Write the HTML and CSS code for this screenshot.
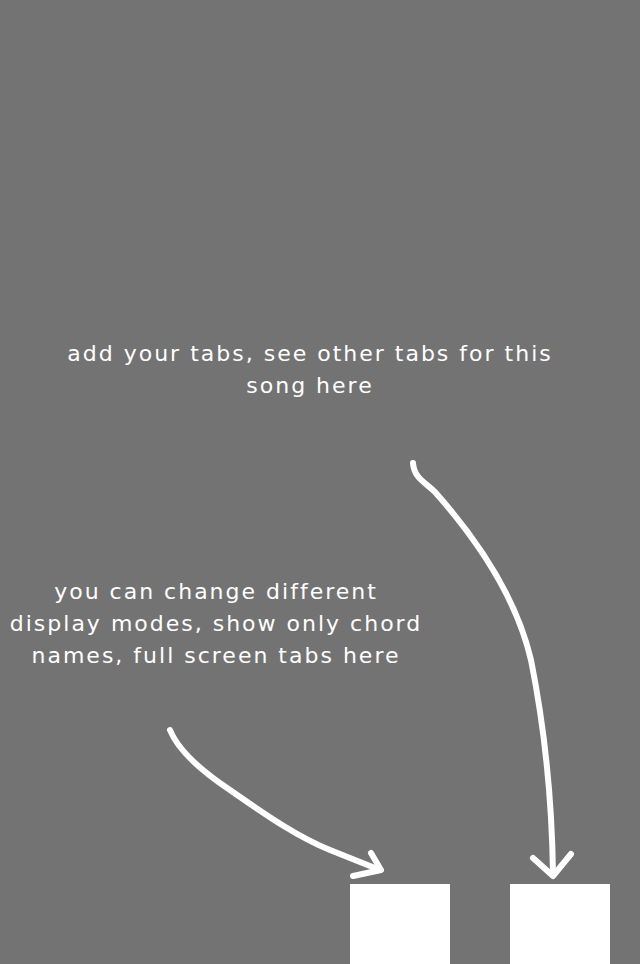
FILE: index.html
```html
<!DOCTYPE html>
<html>
<head>
<meta charset="utf-8">
<link rel="stylesheet" href="styles.css">
</head>
<body>
<div class="screen">
  <p class="tip tip-top">add your tabs, see other tabs for this<br>song here</p>
  <p class="tip tip-mid">you can change different<br>display modes, show only chord<br>names, full screen tabs here</p>
  <div class="bar">
    <div class="slot"></div>
    <div class="slot"></div>
  </div>
  <svg class="arrows" width="640" height="964" viewBox="0 0 640 964">
    <g fill="none" stroke="#ffffff" stroke-width="6" stroke-linecap="round" stroke-linejoin="round">
      <path d="M413 463 C414 478 425 482 435 492 C482 545 517 600 531 660 C545 730 552 800 553 874"/>
      <path d="M533 858 L553 876 L571 854"/>
      <path d="M170 730 C178 750 200 770 230 790 C270 818 300 838 330 850 C350 858 365 864 380 870"/>
      <path d="M371 853 L381 870 L353 876"/>
    </g>
  </svg>
</div>
</body>
</html>
```

FILE: styles.css
```css
html, body {
  margin: 0;
  padding: 0;
  background: #737373;
}

.screen {
  position: relative;
  width: 640px;
  height: 964px;
  display: flex;
  flex-direction: column;
  overflow: hidden;
}

.tip {
  margin: 0;
  color: #ffffff;
  font-family: "DejaVu Sans", sans-serif;
  font-size: 22px;
  line-height: 32px;
  letter-spacing: 2px;
  text-align: center;
}

.tip-top {
  margin-top: 338px;
  width: 620px;
}

.tip-mid {
  margin-top: 174px;
  width: 432px;
}

.bar {
  margin-top: auto;
  display: flex;
  gap: 60px;
  padding-left: 350px;
}

.slot {
  width: 100px;
  height: 80px;
  background: #ffffff;
}

.arrows {
  position: absolute;
  left: 0;
  top: 0;
}
```
